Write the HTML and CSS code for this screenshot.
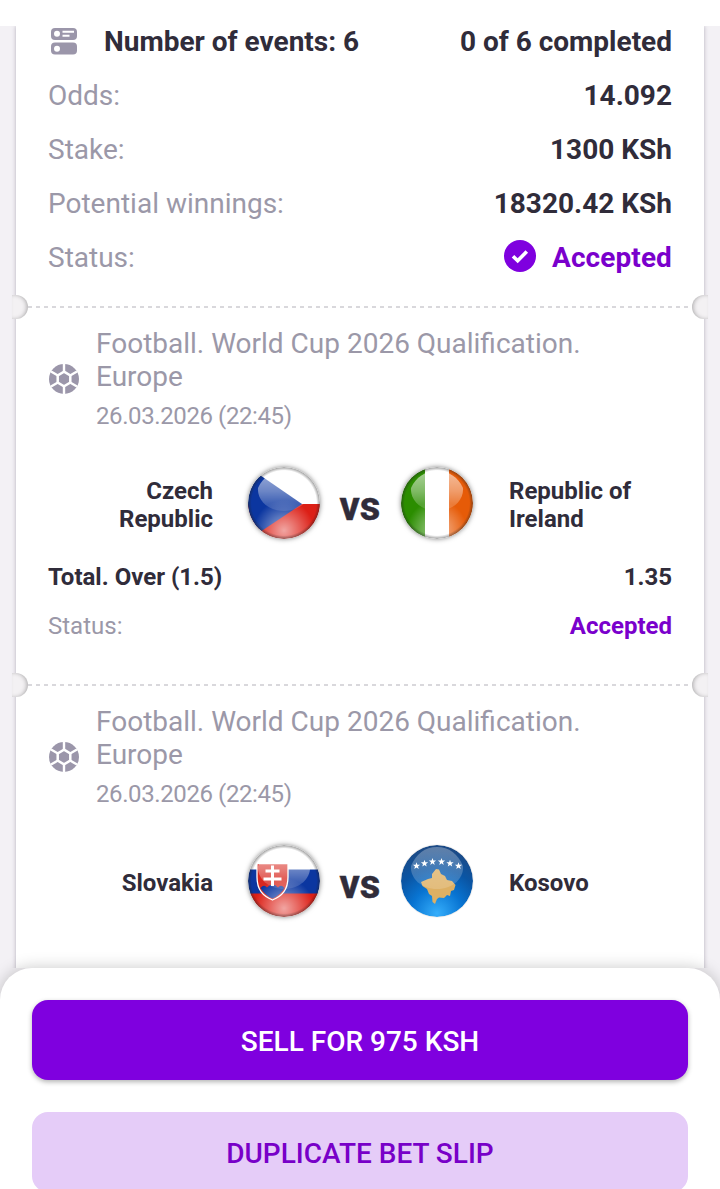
FILE: index.html
```
<!DOCTYPE html>
<html lang="en">
<head>
    <meta charset="UTF-8">
    <meta name="viewport" content="width=device-width, initial-scale=1.0">
    <title>Bet slip</title>
    <link rel="stylesheet" href="styles.css">
</head>
<body>
    <!-- Shared icons and gradients -->
    <svg class="defs" width="0" height="0">
        <defs>
            <linearGradient id="gloss" x1="0" y1="0" x2="0" y2="1">
                <stop offset="0" stop-color="#fff" stop-opacity="0.6"/>
                <stop offset="0.5" stop-color="#fff" stop-opacity="0.4"/>
                <stop offset="1" stop-color="#fff" stop-opacity="0.1"/>
            </linearGradient>
            <linearGradient id="gloss-soft" x1="0" y1="0" x2="0" y2="1">
                <stop offset="0" stop-color="#fff" stop-opacity="0.3"/>
                <stop offset="1" stop-color="#fff" stop-opacity="0.16"/>
            </linearGradient>
            <radialGradient id="glow" cx="0.5" cy="0.88" r="0.42">
                <stop offset="0" stop-color="#fff" stop-opacity="0.6"/>
                <stop offset="1" stop-color="#fff" stop-opacity="0"/>
            </radialGradient>
            <radialGradient id="rim">
                <stop offset="0.9" stop-color="#222" stop-opacity="0"/>
                <stop offset="1" stop-color="#222" stop-opacity="0.45"/>
            </radialGradient>
            <radialGradient id="kosovo-blue" cx="0.5" cy="0.95" r="0.9">
                <stop offset="0" stop-color="#35aefb"/>
                <stop offset="0.4" stop-color="#0874d2"/>
                <stop offset="0.7" stop-color="#0a55a4"/>
                <stop offset="1" stop-color="#1b4a86"/>
            </radialGradient>
            <clipPath id="round"><circle cx="36" cy="36" r="36"/></clipPath>
            <symbol id="ball" viewBox="0 0 30 30">
                <circle cx="15" cy="15" r="15" fill="#9b96aa"/>
                <path d="M15 7.700 21.300 11.350V18.650L15 22.300 8.700 18.650V11.350Z" fill="none" stroke="#fff" stroke-width="2.500"/>
                <path d="M15 0V7.500M15 22.500V30M2 7.500 8.500 11.200M28 7.500 21.500 11.200M2 22.500 8.500 18.800M28 22.500 21.500 18.800" stroke="#fff" stroke-width="2.400"/>
            </symbol>
            <symbol id="shine" viewBox="0 0 72 72">
                <circle cx="36" cy="36" r="36" fill="url(#glow)"/>
                <path d="M10 21C15 10 24 4 36 4S57 10 62 21C63 34 51 44 36 44S9 34 10 21Z" fill="url(#gloss)"/>
                <circle cx="36" cy="36" r="36" fill="url(#rim)"/>
            </symbol>
            <path id="star" d="M0-3.800.9-1.200H3.600L1.500.400 2.200 3.100 0 1.500-2.200 3.100-1.500.400-3.600-1.200H-.9Z" fill="#fff"/>
        </defs>
    </svg>

    <div class="top-bar"></div>
    <div class="content">
        <div class="ticket">
            <div class="summary">
                <div class="row">
                    <div class="events">
                        <svg width="32" height="32" viewBox="0 0 32 32">
                            <rect x="3" y="3" width="26" height="12" rx="4" fill="#9b96aa"/>
                            <rect x="3" y="17.500" width="26" height="12" rx="4" fill="#9b96aa"/>
                            <circle cx="9" cy="8.800" r="3" fill="#fff"/>
                            <circle cx="9" cy="23.800" r="3" fill="#fff"/>
                            <path d="M14.500 6.700H26M14.500 10.800H21.500" stroke="#fff" stroke-width="2"/>
                        </svg>
                        <span>Number of events: 6</span>
                    </div>
                    <span class="value">0 of 6 completed</span>
                </div>
                <div class="row"><span class="label">Odds:</span><span class="value">14.092</span></div>
                <div class="row"><span class="label">Stake:</span><span class="value">1300 KSh</span></div>
                <div class="row"><span class="label">Potential winnings:</span><span class="value">18320.42 KSh</span></div>
                <div class="row">
                    <span class="label">Status:</span>
                    <span class="value accepted">
                        <svg class="check" width="32" height="32" viewBox="0 0 32 32">
                            <circle cx="16" cy="16" r="16" fill="#7f00df"/>
                            <path d="M9 16.200 13.700 20.800 22.800 11.500" fill="none" stroke="#fff" stroke-width="3.600"/>
                        </svg>
                        Accepted
                    </span>
                </div>
            </div>

            <div class="divider"></div>

            <div class="event">
                <div class="event-header">
                    <svg class="ball" width="30" height="30"><use href="#ball"/></svg>
                    <div>
                        <div class="league">Football. World Cup 2026 Qualification. Europe</div>
                        <div class="date">26.03.2026 (22:45)</div>
                    </div>
                </div>
                <div class="teams">
                    <div class="team home">Czech Republic</div>
                    <svg class="flag" width="72" height="72" viewBox="0 0 72 72">
                        <g clip-path="url(#round)">
                            <path d="M0 0H72V37H0Z" fill="#fff"/>
                            <path d="M0 37H72V72H0Z" fill="#dc1f16"/>
                            <path d="M0 0 54 37 0 73Z" fill="#0b36a0"/>
                        </g>
                        <use href="#shine"/>
                    </svg>
                    <div class="vs">vs</div>
                    <svg class="flag guest" width="72" height="72" viewBox="0 0 72 72">
                        <g clip-path="url(#round)">
                            <path d="M0 0H25V72H0Z" fill="#2b8d00"/>
                            <path d="M24 0H49V72H24Z" fill="#fff"/>
                            <path d="M48 0H72V72H48Z" fill="#e65b08"/>
                        </g>
                        <use href="#shine"/>
                    </svg>
                    <div class="team away">Republic of Ireland</div>
                </div>
                <div class="market"><span>Total. Over (1.5)</span><span>1.35</span></div>
                <div class="status"><span class="label">Status:</span><span class="accepted">Accepted</span></div>
            </div>

            <div class="divider"></div>

            <div class="event">
                <div class="event-header">
                    <svg class="ball" width="30" height="30"><use href="#ball"/></svg>
                    <div>
                        <div class="league">Football. World Cup 2026 Qualification. Europe</div>
                        <div class="date">26.03.2026 (22:45)</div>
                    </div>
                </div>
                <div class="teams">
                    <div class="team home">Slovakia</div>
                    <svg class="flag" width="72" height="72" viewBox="0 0 72 72">
                        <g clip-path="url(#round)">
                            <path d="M0 0H72V25H0Z" fill="#fff"/>
                            <path d="M0 24.500H72V49H0Z" fill="#0b36a0"/>
                            <path d="M0 48.500H72V72H0Z" fill="#dc1f16"/>
                            <path d="M9 18.500H40V32C40 45 34 51 24.500 55 15 51 9 45 9 32Z" fill="#d8281f" stroke="#fff" stroke-width="1.300"/>
                            <path d="M12.500 43Q16 39 19 42.500 24.500 36.500 30 42.500 33 39 36.500 43 32 50.500 24.500 53.500 17 50.500 12.500 43Z" fill="#0b36a0"/>
                            <path d="M24.500 20.500V41M17.500 26H31.500M15.500 34H33.500" stroke="#fff" stroke-width="3"/>
                        </g>
                        <use href="#shine"/>
                    </svg>
                    <div class="vs">vs</div>
                    <svg class="flag guest flat" width="72" height="72" viewBox="0 0 72 72">
                        <circle cx="36" cy="36" r="36" fill="url(#kosovo-blue)"/>
                        <path d="M35 24 38 24.500 40 29 44 31 46 35 51 36 54.500 40 53 45 50 46 49 51 46 50 43 53 38 52.500 36 54 34 59 31.500 57 31 51 28 49 26 44 21.500 41 20 37 27 34 31 33 31 29Z" fill="#ddb064"/>
                        <path d="M10 21C15 9 24 2 36 2S57 9 62 21C63 34 51 44 36 44S9 34 10 21Z" fill="url(#gloss-soft)"/>
                        <use href="#star" x="15.500" y="21"/>
                        <use href="#star" x="23.500" y="18.500"/>
                        <use href="#star" x="31.500" y="16.800"/>
                        <use href="#star" x="40.500" y="16.800"/>
                        <use href="#star" x="49" y="18.500"/>
                        <use href="#star" x="57.500" y="21"/>
                    </svg>
                    <div class="team away">Kosovo</div>
                </div>
            </div>
        </div>
    </div>

    <div class="actions">
        <button class="sell">SELL FOR 975 KSH</button>
        <button class="duplicate">DUPLICATE BET SLIP</button>
    </div>
</body>
</html>
```
FILE: styles.css
```
* {
    box-sizing: border-box;
}
body {
    font-family: Roboto, sans-serif;
    margin: 0;
    height: 1189px;
    display: flex;
    flex-direction: column;
    overflow: hidden;
    background: #f3f1f5;
    color: #302c3a;
}
.defs {
    position: absolute;
}
.top-bar {
    height: 26px;
    flex: none;
    background: #fff;
}
.content {
    height: 942px;
    flex: none;
    padding: 0 16px;
    overflow: hidden;
}
.ticket {
    height: 1100px;
    background: #fff;
    box-shadow: 0 0 4px rgba(60, 50, 80, 0.35);
}
.summary {
    display: flex;
    flex-direction: column;
    gap: 22px;
    padding: 0 32px 32px;
}
.row {
    display: flex;
    justify-content: space-between;
    align-items: center;
    height: 32px;
    padding-bottom: 2px;
    font-size: 28px;
}
.events {
    display: flex;
    align-items: center;
    gap: 24px;
    font-weight: 700;
}
.value {
    font-weight: 700;
}
.label {
    color: #9b98a8;
}
.accepted {
    display: flex;
    align-items: center;
    gap: 16px;
    font-weight: 700;
    color: #7a00cc;
}
.row .accepted {
    letter-spacing: 0.1px;
}
.check {
    margin-top: -3px;
}

/* Perforated line with a notch on each side */
.divider {
    position: relative;
    height: 2px;
    margin: 0 12px;
    background: repeating-linear-gradient(90deg, #d9d8dc 0 4px, transparent 4px 8px);
}
.divider::before, .divider::after {
    content: "";
    position: absolute;
    top: -11px;
    width: 16px;
    height: 24px;
    background: #f3f1f3;
}
.divider::before {
    left: -16px;
    border-radius: 0 12px 12px 0;
    box-shadow: inset -2px 0 4px -1px rgba(60, 60, 60, 0.4);
}
.divider::after {
    right: -16px;
    border-radius: 12px 0 0 12px;
    box-shadow: inset 2px 0 4px -1px rgba(60, 60, 60, 0.4);
}

.event {
    height: 376px;
    padding: 18px 32px 0;
}
.event-header {
    display: flex;
    align-items: center;
    gap: 17px;
    height: 104px;
}
.ball {
    flex: none;
    margin-left: 1px;
    margin-top: 2px;
}
.league {
    width: 520px;
    font-size: 28px;
    line-height: 33px;
    color: #9b98a8;
}
.date {
    margin-top: 9px;
    font-size: 24px;
    line-height: 28px;
    letter-spacing: -0.4px;
    color: #9b98a8;
}
.teams {
    display: grid;
    grid-template-columns: 1fr 72px 80px 72px 1fr;
    align-items: center;
    margin-top: 37px;
}
.team {
    padding-top: 4px;
    font-size: 24px;
    line-height: 28px;
    font-weight: 700;
}
.home {
    padding-left: 60px;
    padding-right: 35px;
    text-align: right;
}
.away {
    padding-left: 37px;
}
.flag {
    border-radius: 50%;
    box-shadow: 0 0 5px rgba(0, 0, 0, 0.5);
}
.flag.guest {
    margin-left: 1px;
}
.flag.flat {
    box-shadow: 0 0 1px rgba(0, 0, 0, 0.4);
}
.vs {
    padding-top: 7px;
    text-align: center;
    font-size: 40px;
    line-height: 40px;
    font-weight: 700;
    -webkit-text-stroke: 0.5px #302c3a;
}
.market, .status {
    display: flex;
    justify-content: space-between;
    font-size: 24px;
    line-height: 28px;
}
.market {
    margin-top: 24px;
    font-weight: 700;
}
.status {
    margin-top: 21px;
}

.actions {
    position: relative;
    flex: 1;
    display: flex;
    flex-direction: column;
    gap: 32px;
    padding: 32px 32px 0;
    border-radius: 32px 32px 0 0;
    background: #fff;
    box-shadow: 0 0 16px rgba(0, 0, 0, 0.22);
}
.actions button {
    height: 80px;
    flex: none;
    border: none;
    border-radius: 16px;
    padding: 3px 0 0;
    font-family: inherit;
    font-size: 28px;
    font-weight: 500;
}
.sell {
    background: #7f00df;
    color: #fff;
    box-shadow: 0 2px 5px rgba(0, 0, 0, 0.3);
}
.duplicate {
    background: #e5ccf8;
    color: #7800c8;
}
```
